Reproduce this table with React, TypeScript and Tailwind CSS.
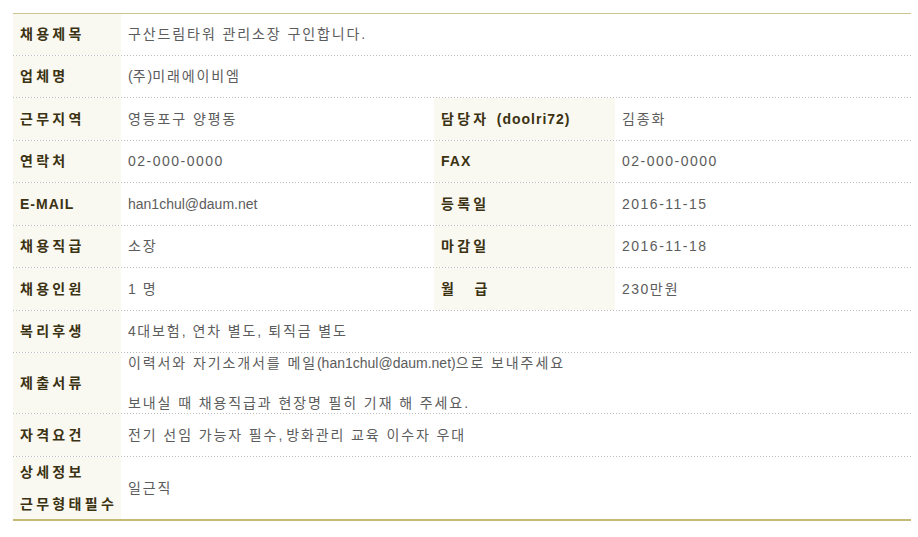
import React from "react";

// split text into korean runs and ascii runs so each gets its own spacing
function Txt({ text, k, a = "" }: { text: string; k: string; a?: string }) {
  const parts = text.split(/([^\x00-\x7F](?:[^\x00-\x7F]| )*)/).filter((p) => p !== "");
  return (
    <span>
      {parts.map((p, i) =>
        /[^\x00-\x7F]/.test(p) ? (
          <span key={i} className={k}>
            {p}
          </span>
        ) : (
          <span key={i} className={a}>
            {p}
          </span>
        )
      )}
    </span>
  );
}

const LK = "tracking-[3.3px]";
const LA = "tracking-[1px]";
const VK = "tracking-[1.9px]";
const NUM = "tracking-[1.5px]";

const L = (s: string) => <Txt text={s} k={LK} a={LA} />;
const V = (s: string, a = "") => <Txt text={s} k={VK} a={a} />;

type Row = {
  label: React.ReactNode;
  value: React.ReactNode;
  label2?: React.ReactNode;
  value2?: React.ReactNode;
  h: string;
};

const ROWS: Row[] = [
  { label: L("채용제목"), value: V("구산드림타워 관리소장 구인합니다."), h: "h-[41px]" },
  { label: L("업체명"), value: V("(주)미래에이비엠"), h: "h-[41px]" },
  {
    label: L("근무지역"),
    value: V("영등포구 양평동"),
    label2: L("담당자 (doolri72)"),
    value2: V("김종화"),
    h: "h-[42px]",
  },
  {
    label: L("연락처"),
    value: V("02-000-0000", NUM),
    label2: L("FAX"),
    value2: V("02-000-0000", NUM),
    h: "h-[41px]",
  },
  {
    label: L("E-MAIL"),
    value: V("han1chul@daum.net"),
    label2: L("등록일"),
    value2: V("2016-11-15", NUM),
    h: "h-[42px]",
  },
  {
    label: L("채용직급"),
    value: V("소장"),
    label2: L("마감일"),
    value2: V("2016-11-18", NUM),
    h: "h-[41px]",
  },
  {
    label: L("채용인원"),
    value: V("1 명", NUM),
    label2: L("월　급"),
    value2: V("230만원", NUM),
    h: "h-[42px]",
  },
  { label: L("복리후생"), value: V("4대보험, 연차 별도, 퇴직금 별도", NUM), h: "h-[41px]" },
  {
    label: L("제출서류"),
    value: (
      <div className="leading-[20px]">
        <p>{V("이력서와 자기소개서를 메일(han1chul@daum.net)으로 보내주세요")}</p>
        <p>&nbsp;</p>
        <p>{V("보내실 때 채용직급과 현장명 필히 기재 해 주세요.")}</p>
      </div>
    ),
    h: "h-[60px]",
  },
  { label: L("자격요건"), value: V("전기 선임 가능자 필수, 방화관리 교육 이수자 우대"), h: "h-[42px]" },
  {
    label: (
      <div className="leading-[32px]">
        <p>{L("상세정보")}</p>
        <p>{L("근무형태필수")}</p>
      </div>
    ),
    value: V("일근직"),
    h: "h-[62px]",
  },
];

const labelCls =
  "flex items-center bg-[#f9f8f1] pl-[7px] text-[14px] font-bold text-[#3b3212]";
const valueCls = "flex items-center pl-[7px] text-[14px] text-[#5c5c5c]";

export default function App() {
  return (
    <div
      className="min-h-[537px] w-[918px] bg-white pt-[13px] pl-[13px]"
      style={{ fontFamily: '"Liberation Sans", "Noto Sans CJK KR", sans-serif' }}
    >
      <div className="w-[898px] border-t border-b-2 border-t-[#cbc68f] border-b-[#c3bb74]">
        {ROWS.map((row, i) => (
          <div key={i}>
            <div className={`flex ${row.h}`}>
              <div className={`${labelCls} w-[108px] shrink-0`}>{row.label}</div>
              {row.label2 !== undefined ? (
                <>
                  <div className={`${valueCls} w-[313px] shrink-0`}>{row.value}</div>
                  <div className={`${labelCls} w-[181px] shrink-0`}>{row.label2}</div>
                  <div className={`${valueCls} flex-1`}>{row.value2}</div>
                </>
              ) : (
                <div className={`${valueCls} flex-1`}>{row.value}</div>
              )}
            </div>
            {i < ROWS.length - 1 && (
              <div className="h-px bg-[repeating-linear-gradient(to_right,#bdbdbd_0px,#bdbdbd_1px,#ffffff_1px,#ffffff_3px)]" />
            )}
          </div>
        ))}
      </div>
    </div>
  );
}
